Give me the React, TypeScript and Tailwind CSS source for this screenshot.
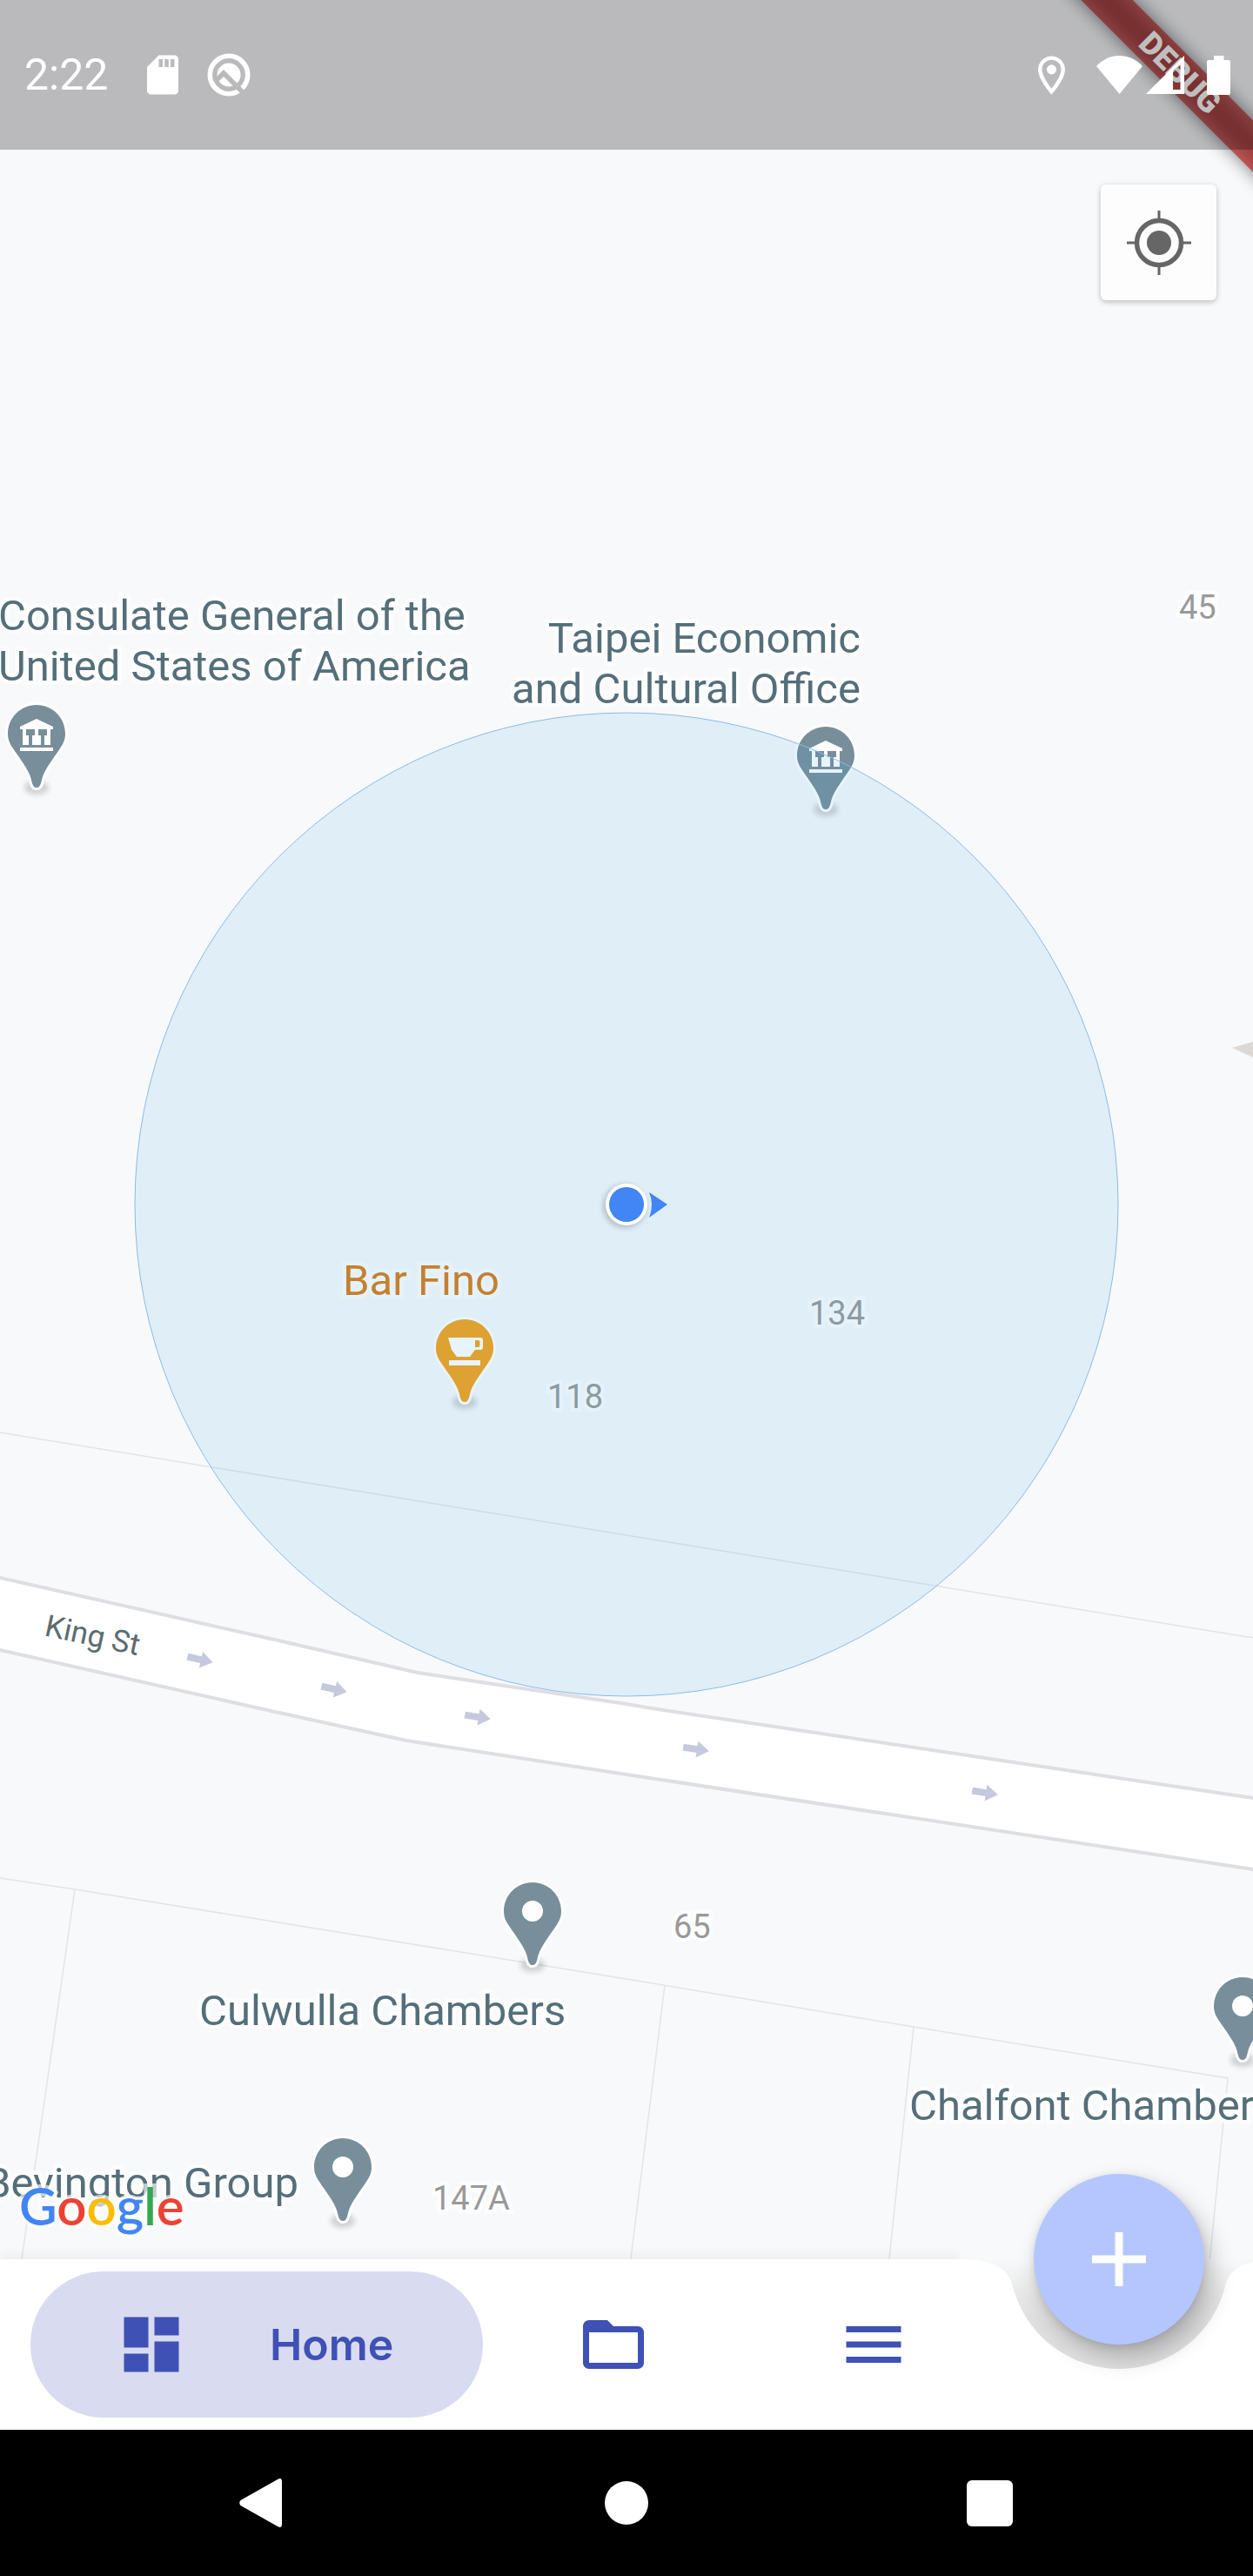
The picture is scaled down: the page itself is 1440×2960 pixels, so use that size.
import React from "react";

type PinKind = "gov" | "cafe" | "place";

const streetArrows = [
  { x: 230, y: 1907, r: 13 },
  { x: 384, y: 1941, r: 13 },
  { x: 549, y: 1973, r: 9 },
  { x: 800, y: 2010, r: 9 },
  { x: 1132, y: 2060, r: 9 },
];

function Pin({ x, y, kind }: { x: number; y: number; kind: PinKind }) {
  const fill = kind === "cafe" ? "#f5a21b" : "#788e9b";
  const body =
    "M0 0C18.500 0 33 15 33 33C33 40 30.500 45 27 50C19 62 10 73 6.500 84C5 90 4.500 95 0 95C-4.500 95 -5 90 -6.500 84C-10 73 -19 62 -27 50C-30.500 45 -33 40 -33 33C-33 15 -18.500 0 0 0Z";
  return (
    <g transform={`translate(${x} ${y})`}>
      <ellipse cx="0" cy="95" rx="14" ry="8" fill="#000" opacity="0.16" filter="url(#soft)" />
      <path d={body} fill={fill} stroke="#fff" strokeWidth="6" strokeLinejoin="round" paintOrder="stroke" />
      {kind === "gov" && (
        <path
          fill="#fff"
          fillRule="evenodd"
          d="M0 16L19 25V28H16V46H-16V28H-19V25ZM-12 28V35H-9V46H-5V35H-2V28ZM2 28V35H5V46H9V35H12V28ZM-19 49H19V53H-19Z"
        />
      )}
      {kind === "cafe" && (
        <path
          fill="#fff"
          fillRule="evenodd"
          d="M-19 21H18Q21 21 21 24V32Q21 35 18 35H12L6 43H-9L-15 35ZM12 24V32H15.500Q17.500 32 17.500 30V26Q17.500 24 15.500 24ZM-18 47H18V53H-18Z"
        />
      )}
      {kind === "place" && <circle cx="0" cy="33" r="12" fill="#fff" />}
    </g>
  );
}

const halo = "[-webkit-text-stroke:9px_#fdfdfe] [paint-order:stroke_fill]";

function PlaceLabel({ className, children }: { className: string; children: React.ReactNode }) {
  return (
    <p className={`absolute whitespace-nowrap text-[49px] leading-[58px] text-[#546f7a] ${halo} ${className}`}>
      {children}
    </p>
  );
}

function HouseNumber({ className, children }: { className: string; children: React.ReactNode }) {
  return (
    <p className={`absolute whitespace-nowrap text-[38px] leading-[44px] text-[#999999] ${halo} ${className}`}>
      {children}
    </p>
  );
}

function MapCanvas() {
  return (
    <div className="absolute inset-0 overflow-hidden">
      {/* Everything is placed from the user's position, the centre of the view */}
      <div className="absolute left-1/2 top-1/2">
        <svg width="1" height="1" viewBox="720 1384 1 1" className="absolute left-0 top-0 overflow-visible" aria-hidden="true">
          <defs>
            <filter id="soft" x="-50%" y="-50%" width="200%" height="200%">
              <feGaussianBlur stdDeviation="3" />
            </filter>
          </defs>
          <g fill="none" stroke="#e3e4e7" strokeWidth="1.500">
            <path d="M-600 1548L0 1646L1440 1882L2040 1980" />
            <path d="M-600 2058L0 2158L86 2171L720 2274L1050 2329L1411 2388L1380 2700" />
            <path d="M86 2171L10 2700" />
            <path d="M764 2281L712 2700" />
            <path d="M1050 2329L1011 2700" />
          </g>
          <path
            d="M-600 1679L0 1813L324 1886L480 1922L720 1958L749 1963L1440 2066L2040 2156V2239L1440 2148L720 2039L467 2000L298 1963L0 1896L-600 1762Z"
            fill="#fff"
            stroke="#dedee3"
            strokeWidth="4"
          />
          {streetArrows.map((a) => (
            <path
              key={a.x}
              d="M-15 -4H1V-9.500L15 0L1 9.500V4H-15Z"
              fill="#c5c9dd"
              transform={`translate(${a.x} ${a.y}) rotate(${a.r})`}
            />
          ))}
          <path d="M1416 1204L1470 1188L1452 1204L1470 1229Z" fill="#dcd8d5" />
          <Pin x={42} y={810} kind="gov" />
          <Pin x={949} y={835} kind="gov" />
          <Pin x={534} y={1516} kind="cafe" />
          <Pin x={612} y={2163} kind="place" />
          <Pin x={394} y={2457} kind="place" />
          <Pin x={1428} y={2272} kind="place" />
        </svg>

        <PlaceLabel className="left-[-722px] top-[-705px]">
          Consulate General of the
          <br />
          United States of America
        </PlaceLabel>
        <PlaceLabel className="right-[-269px] top-[-679px] text-right">
          Taipei Economic
          <br />
          and Cultural Office
        </PlaceLabel>
        <PlaceLabel className="left-[-326px] top-[59px] text-[#d87b18]!">Bar Fino</PlaceLabel>
        <PlaceLabel className="left-[-491px] top-[898px]">Culwulla Chambers</PlaceLabel>
        <PlaceLabel className="right-[377px] top-[1096px]">Bevington Group</PlaceLabel>
        <PlaceLabel className="left-[325px] top-[1007px]">Chalfont Chambers</PlaceLabel>

        <HouseNumber className="left-[635px] top-[-708px]">45</HouseNumber>
        <HouseNumber className="left-[210px] top-[103px]">134</HouseNumber>
        <HouseNumber className="left-[-91px] top-[199px]">118</HouseNumber>
        <HouseNumber className="left-[54px] top-[808px]">65</HouseNumber>
        <HouseNumber className="left-[-223px] top-[1120px]">147A</HouseNumber>
        <p className="absolute left-[-669px] top-[474px] rotate-[12deg] whitespace-nowrap text-[35px] leading-[44px] text-[#5c6b70]">
          King St
        </p>

        <svg width="1" height="1" viewBox="720 1384 1 1" className="absolute left-0 top-0 overflow-visible" aria-hidden="true">
          <circle cx="720" cy="1384" r="565" fill="#38a4da" fillOpacity="0.12" stroke="#8bbce6" strokeWidth="1" />
          <circle cx="718" cy="1386" r="25" fill="#000" opacity="0.2" filter="url(#soft)" />
          <circle cx="720" cy="1384" r="24" fill="#fff" />
          <circle cx="720" cy="1384" r="20" fill="#4285f4" />
          <path d="M746 1370L767 1384L746 1399Q752 1384 746 1370Z" fill="#4285f4" />
        </svg>
      </div>
    </div>
  );
}

function StatusBar() {
  return (
    <header className="relative z-20 flex h-[172px] items-center bg-black/25 pl-[28px] pr-[26px] text-white">
      <time className="text-[50px] leading-[58px]">2:22</time>
      <svg viewBox="0 0 24 24" className="ml-[36px] size-[54px]" fill="currentColor" aria-label="SD card">
        <path d="M18 2h-8L4.020 8 4 20c0 1.100.9 2 2 2h12c1.100 0 2-.9 2-2V4c0-1.100-.9-2-2-2zm-6 6h-2V4h2v4zm3 0h-2V4h2v4zm3 0h-2V4h2v4z" />
      </svg>
      <svg viewBox="0 0 50 50" className="ml-[24px] size-[50px]" fill="none" aria-label="Android">
        <circle cx="25" cy="25" r="21.700" stroke="#fff" strokeWidth="5.600" />
        <circle cx="25" cy="25" r="13.500" fill="#fff" />
        <path d="M9 33L19 23L43 47" stroke="#bababc" strokeWidth="5.600" />
        <path d="M13 43.070A21.700 21.700 0 0 1 5 33.320" stroke="#fff" strokeWidth="5.600" />
      </svg>
      <div className="ml-auto flex items-center">
        <svg viewBox="0 0 24 24" className="size-[53px]" fill="currentColor" aria-label="Location">
          <path d="M12 2C8.130 2 5 5.130 5 9c0 5.250 7 13 7 13s7-7.750 7-13c0-3.870-3.130-7-7-7zM7 9c0-2.760 2.240-5 5-5s5 2.240 5 5c0 2.880-2.880 7.190-5 9.880C9.920 16.210 7 11.850 7 9z" />
          <circle cx="12" cy="9" r="2.500" />
        </svg>
        <svg viewBox="0 0 53 44" className="ml-[25px] h-[44px] w-[53px]" fill="currentColor" aria-label="Wi-Fi">
          <path d="M26.500 44L0 12C7 4 17 0 26.500 0S46 4 53 12Z" />
        </svg>
        <svg viewBox="0 0 44 44" className="ml-[4px] size-[44px]" fill="currentColor" aria-label="Signal">
          <path fillRule="evenodd" d="M44 0V44H0ZM31 17V39H39.500V10Z" />
        </svg>
        <svg viewBox="0 0 27 45" className="ml-[26px] h-[45px] w-[27px]" fill="currentColor" aria-label="Battery">
          <path d="M8 0H19.500V5H25Q27 5 27 7V43Q27 45 25 45H2Q0 45 0 43V7Q0 5 2 5H8Z" />
        </svg>
      </div>
    </header>
  );
}

function DebugBanner() {
  return (
    <div className="pointer-events-none absolute right-0 top-0 z-10 size-[260px] overflow-hidden">
      <div className="absolute right-[-116px] top-[63px] h-[42px] w-[400px] rotate-45">
        <div className="absolute inset-0 bg-black/50 blur-[10px]" />
        <div className="relative flex h-full items-center justify-center bg-[#b71c1c]/63 text-[36px] font-black leading-none text-white">
          DEBUG
        </div>
      </div>
    </div>
  );
}

function BottomBar() {
  return (
    <nav className="relative h-[196px] text-[#3f51b5]" aria-label="Main">
      <div className="absolute inset-0 flex">
        <div className="flex-1 bg-white shadow-[0_-2px_16px_rgba(0,0,0,0.07)] [clip-path:inset(-30px_0_0_0)]" />
        <svg viewBox="0 0 336 196" className="h-[196px] w-[336px] overflow-hidden" aria-hidden="true">
          <defs>
            <linearGradient id="notch" x1="0" y1="0" x2="0" y2="1">
              <stop offset="0" stopColor="#f8f9fa" />
              <stop offset="0.35" stopColor="#e6e6e6" />
              <stop offset="0.6" stopColor="#e0e0e0" />
            </linearGradient>
          </defs>
          <path d="M0 0H336V130H0Z" fill="url(#notch)" />
          <path
            d="M0 0Q52.500 0 59.400 29.100A126 126 0 0 0 304.600 29.100Q311.500 0 364 0V196H0Z"
            fill="#fff"
          />
        </svg>
      </div>
      <div className="relative flex h-full items-center pl-[35px] pr-[287px]">
        <button type="button" className="flex h-[168px] w-[520px] items-center rounded-full bg-[#d9dbf0] pl-[97px]">
          <svg viewBox="0 0 24 24" className="size-[84px]" fill="currentColor" aria-hidden="true">
            <path d="M3 13h8V3H3v10zm0 8h8v-6H3v6zm10 0h8V11h-8v10zm0-18v6h8V3h-8z" />
          </svg>
          <span className="ml-[94px] font-[Inter] text-[50px] font-semibold leading-[60px]">Home</span>
        </button>
        <button type="button" aria-label="Folders" className="flex h-full flex-1 items-center justify-center">
          <svg viewBox="0 0 24 24" className="size-[84px]" fill="currentColor" aria-hidden="true">
            <path d="M20 6h-8l-2-2H4c-1.100 0-1.990.9-1.990 2L2 18c0 1.100.9 2 2 2h16c1.100 0 2-.9 2-2V8c0-1.100-.9-2-2-2zm0 12H4V8h16v10z" />
          </svg>
        </button>
        <button type="button" aria-label="Menu" className="flex h-full flex-1 items-center justify-center">
          <svg viewBox="0 0 24 24" className="size-[84px]" fill="currentColor" aria-hidden="true">
            <path d="M3 18h18v-2H3v2zm0-5h18v-2H3v2zm0-7v2h18V6H3z" />
          </svg>
        </button>
      </div>
      <button
        type="button"
        aria-label="Add"
        className="absolute right-[56px] top-[-98px] flex size-[196px] items-center justify-center rounded-full bg-[#b5c6ff] shadow-[8px_14px_28px_rgba(0,0,0,0.24),0_2px_10px_rgba(0,0,0,0.1)]"
      >
        <svg viewBox="0 0 62 62" className="size-[62px]" aria-hidden="true">
          <path d="M26.500 0H35.500V26.500H62V35.500H35.500V62H26.500V35.500H0V26.500H26.500Z" fill="#fff" />
        </svg>
      </button>
    </nav>
  );
}

function SystemNav() {
  return (
    <footer className="grid h-[168px] grid-cols-3 place-items-center bg-black px-[94px] text-white">
      <button type="button" aria-label="Back">
        <svg viewBox="0 0 56 56" className="size-[56px]" fill="currentColor">
          <path d="M1.500 25Q-1 28 1.500 31L44 55Q49 58 49 52V4Q49 -2 44 1Z" />
        </svg>
      </button>
      <button type="button" aria-label="Home screen" className="size-[50px] rounded-full bg-white" />
      <button type="button" aria-label="Recent apps" className="size-[53px] rounded-md bg-white" />
    </footer>
  );
}

export default function App() {
  return (
    <div className="relative flex min-h-screen flex-col overflow-hidden bg-[#f8f9fb] font-[Roboto,sans-serif]">
      <DebugBanner />
      <StatusBar />
      <main className="relative flex-1">
        <MapCanvas />
        <button
          type="button"
          aria-label="Show my location"
          className="absolute right-[42px] top-[40px] flex size-[133px] items-center justify-center rounded-md bg-[#fdfdfd] shadow-[0_2px_6px_rgba(0,0,0,0.25)]"
        >
          <svg viewBox="-37 -37 74 74" className="size-[74px]" fill="none" stroke="#666" aria-hidden="true">
            <circle r="25.500" strokeWidth="5.500" />
            <circle r="14" fill="#666" stroke="none" />
            <path strokeWidth="3" d="M0 -37V-26M0 26V37M-37 0H-26M26 0H37" />
          </svg>
        </button>
        <a
          href="#google"
          aria-label="Google"
          className="absolute bottom-[26px] left-[22px] font-[Lato,sans-serif] text-[60px] font-semibold leading-[72px] [-webkit-text-stroke:8px_rgba(255,255,255,0.65)] [paint-order:stroke_fill]"
        >
          <span className="text-[#4285f4]">G</span>
          <span className="text-[#ea4335]">o</span>
          <span className="text-[#fbbc05]">o</span>
          <span className="text-[#4285f4]">g</span>
          <span className="text-[#34a853]">l</span>
          <span className="text-[#ea4335]">e</span>
        </a>
      </main>
      <BottomBar />
      <SystemNav />
    </div>
  );
}
